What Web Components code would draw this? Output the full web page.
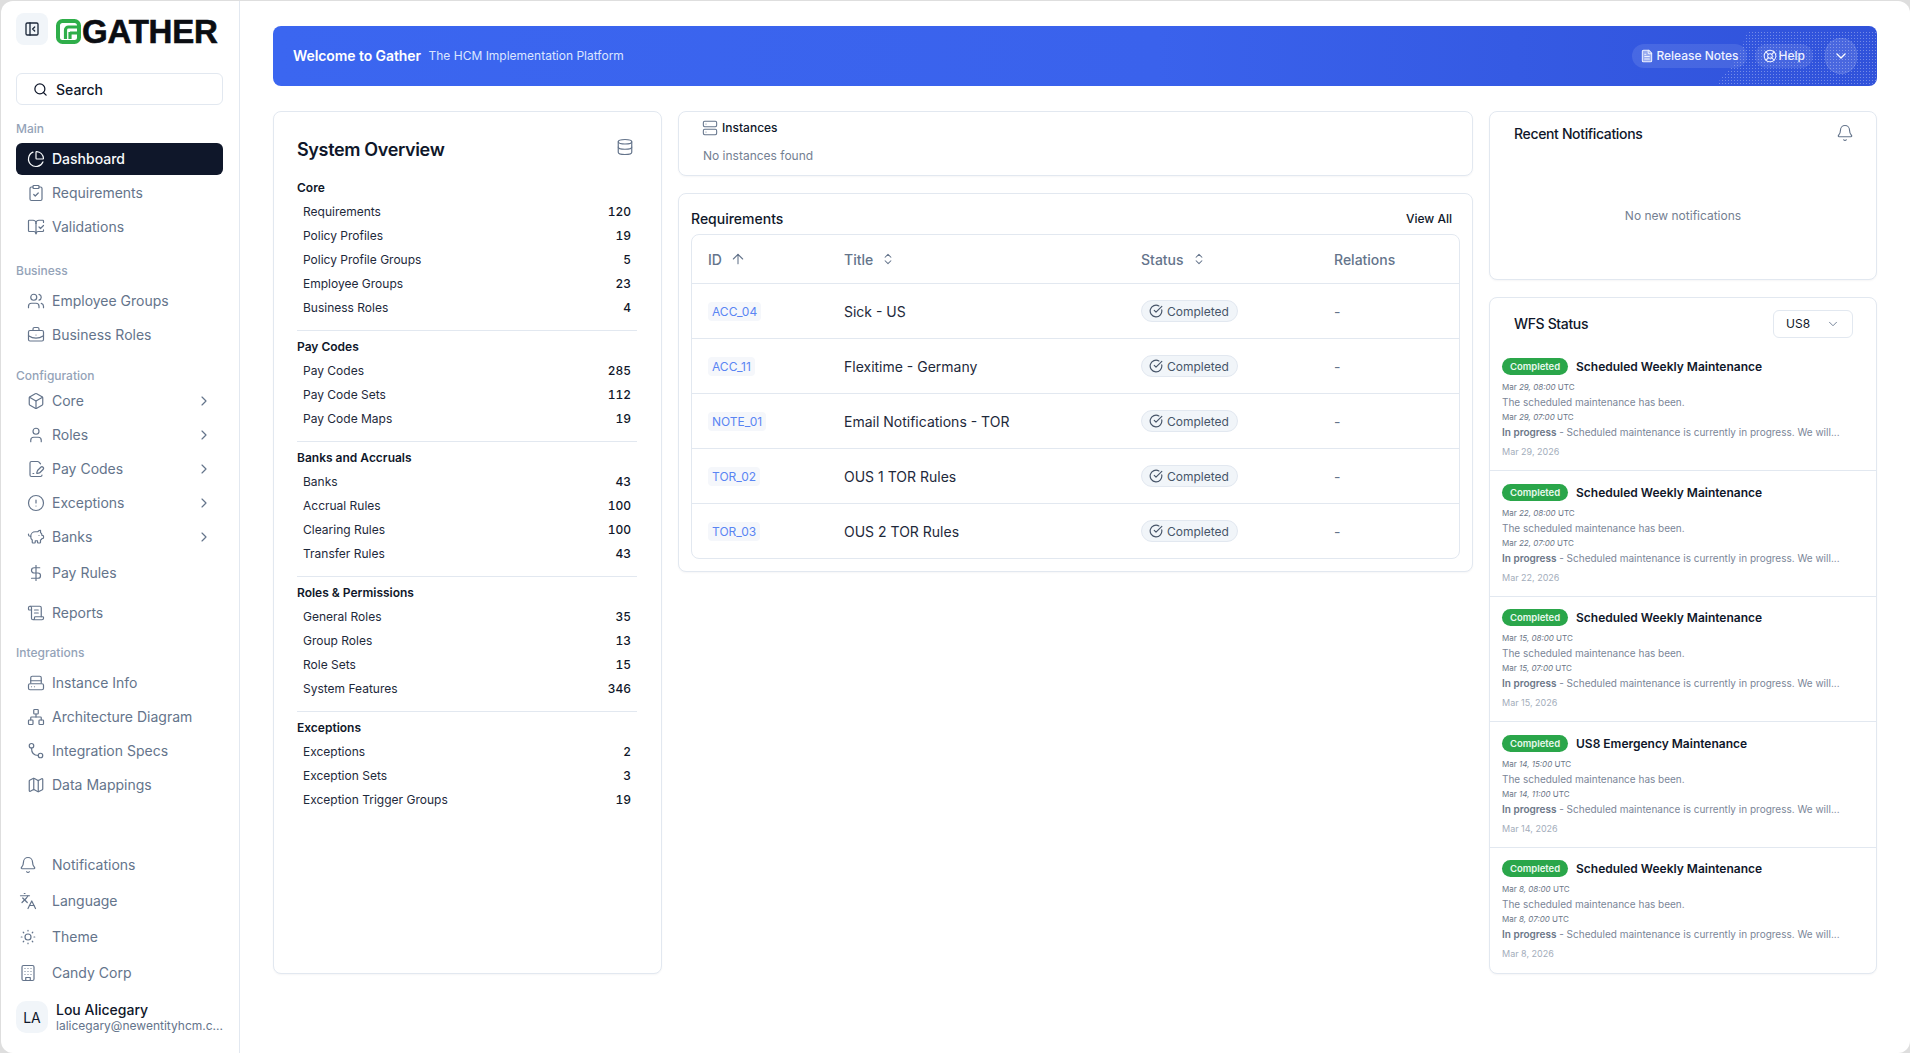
<!DOCTYPE html>
<html lang="en">
<head>
<meta charset="utf-8">
<title>Gather</title>
<style>
  html, body { margin: 0; height: 100%; }
  body {
    background: #dedede;
    overflow: hidden;
    font-family: Inter, "Liberation Sans", sans-serif;
    color: #0f172a;
    font-size: 14px;
  }
</style>
</head>
<body>
<app-shell>
  <app-sidebar slot="sidebar">
    <nav-section label="Main" style="--top:16px;--below:6px">
      <nav-item icon="pie" active>Dashboard</nav-item>
      <nav-item icon="clipboard">Requirements</nav-item>
      <nav-item icon="book">Validations</nav-item>
    </nav-section>
    <nav-section label="Business" style="--top:18px;--below:6px">
      <nav-item icon="users">Employee Groups</nav-item>
      <nav-item icon="briefcase">Business Roles</nav-item>
    </nav-section>
    <nav-section label="Configuration" style="--top:15px;--below:1px">
      <nav-item icon="box" more>Core</nav-item>
      <nav-item icon="user" more>Roles</nav-item>
      <nav-item icon="filepen" more>Pay Codes</nav-item>
      <nav-item icon="alert" more>Exceptions</nav-item>
      <nav-item icon="piggy" more>Banks</nav-item>
      <nav-item icon="dollar" style="margin-top:4px">Pay Rules</nav-item>
      <nav-item icon="scroll" style="margin-top:8px">Reports</nav-item>
    </nav-section>
    <nav-section label="Integrations" style="--top:14px;--below:6px">
      <nav-item icon="drive">Instance Info</nav-item>
      <nav-item icon="network">Architecture Diagram</nav-item>
      <nav-item icon="route">Integration Specs</nav-item>
      <nav-item icon="map">Data Mappings</nav-item>
    </nav-section>
    <nav-item slot="footer" icon="bell" compact>Notifications</nav-item>
    <nav-item slot="footer" icon="languages" compact>Language</nav-item>
    <nav-item slot="footer" icon="sun" compact>Theme</nav-item>
    <nav-item slot="footer" icon="building" compact>Candy Corp</nav-item>
    <user-chip slot="footer" initials="LA" name="Lou Alicegary" email="lalicegary@newentityhcm.c..."></user-chip>
  </app-sidebar>

  <welcome-banner></welcome-banner>

  <dash-grid>
    <overview-card slot="left">
      <stat-group title="Core">
        <stat-row value="120">Requirements</stat-row>
        <stat-row value="19">Policy Profiles</stat-row>
        <stat-row value="5">Policy Profile Groups</stat-row>
        <stat-row value="23">Employee Groups</stat-row>
        <stat-row value="4">Business Roles</stat-row>
      </stat-group>
      <stat-group title="Pay Codes">
        <stat-row value="285">Pay Codes</stat-row>
        <stat-row value="112">Pay Code Sets</stat-row>
        <stat-row value="19">Pay Code Maps</stat-row>
      </stat-group>
      <stat-group title="Banks and Accruals">
        <stat-row value="43">Banks</stat-row>
        <stat-row value="100">Accrual Rules</stat-row>
        <stat-row value="100">Clearing Rules</stat-row>
        <stat-row value="43">Transfer Rules</stat-row>
      </stat-group>
      <stat-group title="Roles &amp; Permissions">
        <stat-row value="35">General Roles</stat-row>
        <stat-row value="13">Group Roles</stat-row>
        <stat-row value="15">Role Sets</stat-row>
        <stat-row value="346">System Features</stat-row>
      </stat-group>
      <stat-group title="Exceptions" last>
        <stat-row value="2">Exceptions</stat-row>
        <stat-row value="3">Exception Sets</stat-row>
        <stat-row value="19">Exception Trigger Groups</stat-row>
      </stat-group>
    </overview-card>

    <instances-card slot="middle"></instances-card>
    <req-card slot="middle">
      <req-row code="ACC_04" status="Completed">Sick - US</req-row>
      <req-row code="ACC_11" status="Completed">Flexitime - Germany</req-row>
      <req-row code="NOTE_01" status="Completed">Email Notifications - TOR</req-row>
      <req-row code="TOR_02" status="Completed">OUS 1 TOR Rules</req-row>
      <req-row code="TOR_03" status="Completed" last>OUS 2 TOR Rules</req-row>
    </req-card>

    <notifications-card slot="right"></notifications-card>
    <wfs-card slot="right">
      <wfs-item heading="Scheduled Weekly Maintenance" day="29" first="08:00" second="07:00" date="Mar 29, 2026"></wfs-item>
      <wfs-item heading="Scheduled Weekly Maintenance" day="22" first="08:00" second="07:00" date="Mar 22, 2026"></wfs-item>
      <wfs-item heading="Scheduled Weekly Maintenance" day="15" first="08:00" second="07:00" date="Mar 15, 2026"></wfs-item>
      <wfs-item heading="US8 Emergency Maintenance" day="14" first="15:00" second="11:00" date="Mar 14, 2026"></wfs-item>
      <wfs-item heading="Scheduled Weekly Maintenance" day="8" first="08:00" second="07:00" date="Mar 8, 2026" last></wfs-item>
    </wfs-card>
  </dash-grid>
</app-shell>

<script>
const ICONS = {
  panel: '<rect x="3" y="3" width="18" height="18" rx="2"/><path d="M9 3v18"/><path d="m16 15-3-3 3-3"/>',
  search: '<circle cx="11" cy="11" r="8"/><path d="m21 21-4.3-4.3"/>',
  pie: '<path d="M21 12c.552 0 1.005-.449.95-.998a10 10 0 0 0-8.953-8.951c-.55-.055-.998.398-.998.95v8a1 1 0 0 0 1 1z"/><path d="M21.21 15.89A10 10 0 1 1 8 2.83"/>',
  clipboard: '<rect x="8" y="2" width="8" height="4" rx="1"/><path d="M16 4h2a2 2 0 0 1 2 2v14a2 2 0 0 1-2 2H6a2 2 0 0 1-2-2V6a2 2 0 0 1 2-2h2"/><path d="m9 14 2 2 4-4"/>',
  book: '<path d="M12 21V7"/><path d="m16 12 2 2 4-4"/><path d="M22 6V4a1 1 0 0 0-1-1h-5a4 4 0 0 0-4 4 4 4 0 0 0-4-4H3a1 1 0 0 0-1 1v13a1 1 0 0 0 1 1h6a3 3 0 0 1 3 3 3 3 0 0 1 3-3h6a1 1 0 0 0 1-1v-1.3"/>',
  users: '<path d="M16 21v-2a4 4 0 0 0-4-4H6a4 4 0 0 0-4 4v2"/><path d="M16 3.128a4 4 0 0 1 0 7.744"/><path d="M22 21v-2a4 4 0 0 0-3-3.87"/><circle cx="9" cy="7" r="4"/>',
  briefcase: '<path d="M12 12h.01"/><path d="M16 6V4a2 2 0 0 0-2-2h-4a2 2 0 0 0-2 2v2"/><path d="M22 13a18.15 18.15 0 0 1-20 0"/><rect x="2" y="6" width="20" height="14" rx="2"/>',
  box: '<path d="M21 8a2 2 0 0 0-1-1.73l-7-4a2 2 0 0 0-2 0l-7 4A2 2 0 0 0 3 8v8a2 2 0 0 0 1 1.73l7 4a2 2 0 0 0 2 0l7-4A2 2 0 0 0 21 16Z"/><path d="m3.3 7 8.7 5 8.7-5"/><path d="M12 22V12"/>',
  user: '<path d="M19 21v-2a4 4 0 0 0-4-4H9a4 4 0 0 0-4 4v2"/><circle cx="12" cy="7" r="4"/>',
  filepen: '<path d="m18 5-2.414-2.414A2 2 0 0 0 14.172 2H6a2 2 0 0 0-2 2v16a2 2 0 0 0 2 2h12a2 2 0 0 0 2-2"/><path d="M21.378 12.626a1 1 0 0 0-3.004-3.004l-4.01 4.012a2 2 0 0 0-.506.854l-.837 2.87a.5.5 0 0 0 .62.62l2.87-.837a2 2 0 0 0 .854-.506z"/><path d="M8 18h1"/>',
  alert: '<circle cx="12" cy="12" r="10"/><path d="M12 8v4"/><path d="M12 16h.01"/>',
  piggy: '<path d="M11 17h3v2a1 1 0 0 0 1 1h2a1 1 0 0 0 1-1v-3a3.16 3.16 0 0 0 2-2h1a1 1 0 0 0 1-1v-2a1 1 0 0 0-1-1h-1a5 5 0 0 0-2-4V3a4 4 0 0 0-3.2 1.6l-.3.4H11a6 6 0 0 0-6 6v1a5 5 0 0 0 2 4v3a1 1 0 0 0 1 1h2a1 1 0 0 0 1-1z"/><path d="M16 10h.01"/><path d="M2 8v1a2 2 0 0 0 2 2h1"/>',
  dollar: '<path d="M12 2v20"/><path d="M17 5H9.5a3.5 3.5 0 0 0 0 7h5a3.5 3.5 0 0 1 0 7H6"/>',
  scroll: '<path d="M15 12h-5"/><path d="M15 8h-5"/><path d="M19 17V5a2 2 0 0 0-2-2H4"/><path d="M8 21h12a2 2 0 0 0 2-2v-1a1 1 0 0 0-1-1H11a1 1 0 0 0-1 1v1a2 2 0 1 1-4 0V5a2 2 0 1 0-4 0v2a1 1 0 0 0 1 1h3"/>',
  drive: '<path d="M5 12V5a2 2 0 0 1 2-2h10a2 2 0 0 1 2 2v7"/><path d="M5 9h14"/><rect x="2" y="13" width="20" height="8" rx="2"/><path d="M6 17h.01"/><path d="M10 17h.01"/>',
  network: '<rect x="16" y="16" width="6" height="6" rx="1"/><rect x="2" y="16" width="6" height="6" rx="1"/><rect x="9" y="2" width="6" height="6" rx="1"/><path d="M5 16v-3a1 1 0 0 1 1-1h12a1 1 0 0 1 1 1v3"/><path d="M12 12V8"/>',
  route: '<circle cx="6" cy="5" r="3"/><circle cx="18" cy="18" r="3"/><path d="M6 8c0 6 3 10 9 10"/>',
  map: '<path d="M14.106 5.553a2 2 0 0 0 1.788 0l3.659-1.83A1 1 0 0 1 21 4.619v12.764a1 1 0 0 1-.553.894l-4.553 2.277a2 2 0 0 1-1.788 0l-4.212-2.106a2 2 0 0 0-1.788 0l-3.659 1.83A1 1 0 0 1 3 19.381V6.618a1 1 0 0 1 .553-.894l4.553-2.277a2 2 0 0 1 1.788 0z"/><path d="M15 5.764v15"/><path d="M9 3.236v15"/>',
  bell: '<path d="M10.268 21a2 2 0 0 0 3.464 0"/><path d="M3.262 15.326A1 1 0 0 0 4 17h16a1 1 0 0 0 .74-1.673C19.41 13.956 18 12.499 18 8A6 6 0 0 0 6 8c0 4.499-1.411 5.956-2.738 7.326"/>',
  languages: '<path d="m5 8 6 6"/><path d="m4 14 6-6 2-3"/><path d="M2 5h12"/><path d="M7 2h1"/><path d="m22 22-5-10-5 10"/><path d="M14 18h6"/>',
  sun: '<circle cx="12" cy="12" r="4"/><path d="M12 3v1"/><path d="M12 20v1"/><path d="M3 12h1"/><path d="M20 12h1"/><path d="m18.364 5.636-.707.707"/><path d="m6.343 17.657-.707.707"/><path d="m5.636 5.636.707.707"/><path d="m17.657 17.657.707.707"/>',
  building: '<rect x="4" y="2" width="16" height="20" rx="2"/><path d="M9 22v-4h6v4"/><path d="M8 6h.01M12 6h.01M16 6h.01M8 10h.01M12 10h.01M16 10h.01M8 14h.01M12 14h.01M16 14h.01"/>',
  right: '<path d="m9 18 6-6-6-6"/>',
  down: '<path d="m6 9 6 6 6-6"/>',
  arrowup: '<path d="m5 12 7-7 7 7"/><path d="M12 19V5"/>',
  updown: '<path d="m7 15 5 5 5-5"/><path d="m7 9 5-5 5 5"/>',
  database: '<ellipse cx="12" cy="5" rx="9" ry="3"/><path d="M3 5v14a9 3 0 0 0 18 0V5"/><path d="M3 12a9 3 0 0 0 18 0"/>',
  check: '<path d="M21.801 10A10 10 0 1 1 17 3.335"/><path d="m9 11 3 3L22 4"/>',
  server: '<rect x="2" y="2" width="20" height="8" rx="2"/><rect x="2" y="14" width="20" height="8" rx="2"/><path d="M6 6h.01"/><path d="M6 18h.01"/>',
  filetext: '<path d="M15 2H6a2 2 0 0 0-2 2v16a2 2 0 0 0 2 2h12a2 2 0 0 0 2-2V7Z" fill="rgba(255,255,255,.45)"/><path d="M14 2v4a2 2 0 0 0 2 2h4"/><path d="M10 9H8"/><path d="M16 13H8"/><path d="M16 17H8"/>',
  lifebuoy: '<circle cx="12" cy="12" r="10"/><path d="m4.93 4.93 4.24 4.24"/><path d="m14.83 9.17 4.24-4.24"/><path d="m14.83 14.83 4.24 4.24"/><path d="m9.17 14.83-4.24 4.24"/><circle cx="12" cy="12" r="4"/>'
}

class UiIcon extends HTMLElement {
  connectedCallback() {
    const size = this.getAttribute('size') || 16
    const stroke = this.getAttribute('stroke') || 2
    this.attachShadow({ mode: 'open' }).innerHTML = `
      <style>
        :host { display: inline-flex; flex: none; }
        svg { display: block; }
      </style>
      <svg width="${size}" height="${size}" viewBox="0 0 24 24" fill="none" stroke="currentColor"
        stroke-width="${stroke}" stroke-linecap="round" stroke-linejoin="round">${ICONS[this.getAttribute('name')] || ''}</svg>`
  }
}

class AppShell extends HTMLElement {
  constructor() {
    super()
    this.attachShadow({ mode: 'open' }).innerHTML = `
      <style>
        :host {
          display: flex;
          margin: 1px 0 0 1px;
          height: calc(100vh - 1px);
          background: #fff;
          border-radius: 12px;
          overflow: hidden;
        }
        main { flex: 1; min-width: 0; padding: 25px 33px 0 33px; }
      </style>
      <slot name="sidebar"></slot>
      <main><slot></slot></main>`
  }
}

class AppSidebar extends HTMLElement {
  constructor() {
    super()
    this.attachShadow({ mode: 'open' }).innerHTML = `
      <style>
        :host {
          display: flex;
          flex-direction: column;
          flex: none;
          box-sizing: border-box;
          width: 239px;
          height: 100%;
          padding: 12px 16px 20px 15px;
          border-right: 1px solid #e2e8f0;
        }
        .head { display: flex; align-items: flex-start; height: 32px; }
        .toggle {
          width: 32px; height: 32px; border-radius: 8px; background: #f1f5f9;
          display: flex; align-items: center; justify-content: center; color: #1e293b;
        }
        .mark { margin: 6px 0 0 8px; }
        .word {
          font-family: "Liberation Sans", Arial, sans-serif;
          font-weight: 700;
          font-size: 33px;
          line-height: 32px;
          letter-spacing: -0.2px;
          margin: 3px 0 0 1px;
          color: #0b0d12;
          -webkit-text-stroke: 0.6px #0b0d12;
        }
        .search {
          display: flex; align-items: center; gap: 8px;
          box-sizing: border-box; height: 32px; margin-top: 28px;
          padding-left: 16px; border: 1px solid #e2e8f0; border-radius: 6px;
          font-weight: 500; color: #0f172a;
        }
        .spacer { flex: 1; }
        .foot { display: flex; flex-direction: column; }
      </style>
      <div class="head">
        <span class="toggle"><ui-icon name="panel" size="16"></ui-icon></span>
        <svg class="mark" width="25" height="25" viewBox="0 0 25 25" fill="none">
          <rect x="2" y="2" width="21" height="21" rx="4.5" stroke="#2fae4a" stroke-width="4"/>
          <path d="M21 8H12.5a3 3 0 0 0-3 3v9" stroke="#2fae4a" stroke-width="3.2"/>
          <path d="M14 14h7" stroke="#2fae4a" stroke-width="3.2"/>
          <path d="M14 13v7" stroke="#2fae4a" stroke-width="3.2"/>
        </svg>
        <span class="word">GATHER</span>
      </div>
      <div class="search"><ui-icon name="search" size="15"></ui-icon>Search</div>
      <slot></slot>
      <div class="spacer"></div>
      <div class="foot"><slot name="footer"></slot></div>`
  }
}

class NavSection extends HTMLElement {
  constructor() {
    super()
    this.attachShadow({ mode: 'open' }).innerHTML = `
      <style>
        :host { display: block; margin-top: var(--top, 16px); }
        .label {
          font-size: 12px; line-height: 16px; font-weight: 500; color: #94a3b8;
          margin-bottom: var(--below, 7px);
        }
      </style>
      <div class="label"></div>
      <slot></slot>`
  }
  connectedCallback() {
    this.shadowRoot.querySelector('.label').textContent = this.getAttribute('label')
  }
}

class NavItem extends HTMLElement {
  constructor() {
    super()
    this.attachShadow({ mode: 'open' }).innerHTML = `
      <style>
        :host {
          display: flex; align-items: center; gap: 7px;
          box-sizing: border-box; height: 32px; margin-bottom: 2px;
          padding: 0 11px; border-radius: 6px;
          color: #64748b; font-size: 14px; white-space: nowrap;
        }
        :host([active]) { background: #0f172a; color: #f8fafc; font-weight: 500; }
        :host([compact]) { height: 36px; margin-bottom: 0; padding-left: 3px; gap: 15px; }
        .label { flex: 1; padding-bottom: 1px; }
        .slotbox { display: inline-flex; }
      </style>
      <span class="slotbox" id="icon"></span>
      <span class="label"><slot></slot></span>
      <span class="slotbox" id="more"></span>`
  }
  connectedCallback() {
    const root = this.shadowRoot
    root.querySelector('#icon').innerHTML = `<ui-icon name="${this.getAttribute('icon')}" size="18" stroke="1.6"></ui-icon>`
    if (this.hasAttribute('more')) {
      root.querySelector('#more').innerHTML = '<ui-icon name="right" size="16" stroke="1.75"></ui-icon>'
    }
  }
}

class UserChip extends HTMLElement {
  connectedCallback() {
    this.attachShadow({ mode: 'open' }).innerHTML = `
      <style>
        :host { display: flex; align-items: center; gap: 8px; margin-top: 10px; height: 32px; }
        .avatar {
          flex: none; width: 32px; height: 32px; border-radius: 10px; background: #f1f5f9;
          display: flex; align-items: center; justify-content: center; font-size: 14px;
        }
        .info { min-width: 0; flex: 1; }
        .name { font-size: 14px; line-height: 17px; font-weight: 500; color: #0f172a; }
        .email { font-size: 12px; line-height: 15px; color: #64748b; white-space: nowrap; }
      </style>
      <div class="avatar">${this.getAttribute('initials')}</div>
      <div class="info">
        <div class="name">${this.getAttribute('name')}</div>
        <div class="email">${this.getAttribute('email')}</div>
      </div>`
  }
}

class WelcomeBanner extends HTMLElement {
  constructor() {
    super()
    this.attachShadow({ mode: 'open' }).innerHTML = `
      <style>
        :host {
          display: flex; align-items: center; position: relative; overflow: hidden;
          box-sizing: border-box; height: 60px; padding: 0 20px 1px;
          border-radius: 8px; color: #fff;
          background: linear-gradient(90deg, #3b66f0 0%, #3a62ec 55%, #3052da 100%);
        }
        .dots {
          position: absolute; right: 0; top: 5px; bottom: 0; width: 162px;
          background-image: radial-gradient(rgba(255,255,255,.32) .7px, transparent .9px);
          background-size: 3px 3px;
          clip-path: polygon(20% 0, 100% 0, 100% 100%, 0 100%, 14% 50%);
        }
        .title { font-size: 14px; font-weight: 600; letter-spacing: -0.08px; }
        .sub { font-size: 12px; margin-left: 7.5px; color: #dbe5ff; }
        .actions { position: relative; margin-left: auto; display: flex; align-items: center; gap: 8px; }
        .pill {
          display: flex; align-items: center; gap: 2px; height: 24px; padding: 0 8px;
          border-radius: 12px; background: rgba(255,255,255,.1);
          font-size: 12px; font-weight: 500; color: #eef2ff;
        }
        .round {
          display: flex; align-items: center; justify-content: center;
          box-sizing: border-box; width: 32px; height: 36px; margin-left: 4px;
          border-radius: 16px; background: rgba(255,255,255,.12);
          border: 1px solid rgba(255,255,255,.1);
        }
      </style>
      <div class="dots"></div>
      <span class="title">Welcome to Gather</span>
      <span class="sub">The HCM Implementation Platform</span>
      <div class="actions">
        <span class="pill"><ui-icon name="filetext" size="14" stroke="1.75"></ui-icon>Release Notes</span>
        <span class="pill"><ui-icon name="lifebuoy" size="14" stroke="1.75"></ui-icon>Help</span>
        <span class="round"><ui-icon name="down" size="16"></ui-icon></span>
      </div>`
  }
}

class DashGrid extends HTMLElement {
  constructor() {
    super()
    this.attachShadow({ mode: 'open' }).innerHTML = `
      <style>
        :host {
          display: grid; grid-template-columns: 389px 1fr 388px; gap: 16px;
          margin-top: 25px; align-items: stretch;
        }
        .col { display: flex; flex-direction: column; gap: 17px; min-width: 0; }
        .col.left { gap: 0; }
      </style>
      <div class="col left"><slot name="left"></slot></div>
      <div class="col"><slot name="middle"></slot></div>
      <div class="col"><slot name="right"></slot></div>`
  }
}

// shared card box, every card copies this in its own shadow style
const CARD = `
  display: block; box-sizing: border-box; background: #fff;
  border: 1px solid #e2e8f0; border-radius: 8px;
  box-shadow: 0 1px 2px rgba(15,23,42,.04);`

class OverviewCard extends HTMLElement {
  constructor() {
    super()
    this.attachShadow({ mode: 'open' }).innerHTML = `
      <style>
        :host { ${CARD} flex: 1; padding: 23px 24px 0 23px; }
        .head { display: flex; align-items: center; justify-content: space-between; height: 30px; margin-bottom: 11px; }
        h2 { margin: 0 0 1px; font-size: 18px; font-weight: 600; letter-spacing: -0.35px; color: #0f172a; }
        .head ui-icon { color: #64748b; margin: -6px 3px 0 0; }
      </style>
      <div class="head"><h2>System Overview</h2><ui-icon name="database" size="18" stroke="1.6"></ui-icon></div>
      <slot></slot>`
  }
}

class StatGroup extends HTMLElement {
  constructor() {
    super()
    this.attachShadow({ mode: 'open' }).innerHTML = `
      <style>
        :host { display: block; padding-bottom: 10px; margin-bottom: 4px; border-bottom: 1px solid #e2e8f0; }
        :host([last]) { border-bottom: 0; }
        .title { font-size: 12px; line-height: 24px; font-weight: 600; color: #0f172a; }
      </style>
      <div class="title"></div>
      <slot></slot>`
  }
  connectedCallback() {
    this.shadowRoot.querySelector('.title').textContent = this.getAttribute('title')
  }
}

class StatRow extends HTMLElement {
  constructor() {
    super()
    this.attachShadow({ mode: 'open' }).innerHTML = `
      <style>
        :host {
          display: flex; justify-content: space-between;
          padding: 0 6px 0 6px; font-size: 12px; line-height: 24px; color: #1e293b;
        }
        .value { font-weight: 500; color: #0f172a; font-variant-numeric: tabular-nums; }
      </style>
      <span><slot></slot></span><span class="value"></span>`
  }
  connectedCallback() {
    this.shadowRoot.querySelector('.value').textContent = this.getAttribute('value')
  }
}

class InstancesCard extends HTMLElement {
  constructor() {
    super()
    this.attachShadow({ mode: 'open' }).innerHTML = `
      <style>
        :host { ${CARD} height: 65px; padding: 7px 24px 0 23px; }
        .head { display: flex; align-items: center; gap: 4px; font-size: 12px; line-height: 18px; font-weight: 500; color: #0f172a; }
        .head ui-icon { color: #64748b; }
        p { margin: 10px 0 0 1px; font-size: 12px; line-height: 18px; color: #748092; }
      </style>
      <div class="head"><ui-icon name="server" size="16" stroke="1.6"></ui-icon>Instances</div>
      <p>No instances found</p>`
  }
}

const REQ_COLUMNS = 'grid-template-columns: 136px 297px 193px 1fr;'

class ReqCard extends HTMLElement {
  constructor() {
    super()
    this.attachShadow({ mode: 'open' }).innerHTML = `
      <style>
        :host { ${CARD} padding: 0 12px 12px; }
        .top { display: flex; align-items: center; justify-content: space-between; box-sizing: border-box; height: 40px; padding: 8px 8px 0 0; }
        .top b { font-size: 14px; font-weight: 500; color: #0f172a; }
        .top a { font-size: 12px; font-weight: 500; color: #0f172a; }
        .table { border: 1px solid #e2e8f0; border-radius: 8px; overflow: hidden; }
        .cols {
          display: grid; ${REQ_COLUMNS} align-items: center; height: 48px;
          border-bottom: 1px solid #e2e8f0;
          font-size: 14px; font-weight: 500; color: #64748b;
        }
        .cols span { display: flex; align-items: center; padding-left: 16px; }
        .cols ui-icon { margin-left: 8px; }
      </style>
      <div class="top"><b>Requirements</b><a>View All</a></div>
      <div class="table">
        <div class="cols">
          <span>ID<ui-icon name="arrowup" size="16" stroke="1.6"></ui-icon></span>
          <span>Title<ui-icon name="updown" size="14" stroke="1.75"></ui-icon></span>
          <span>Status<ui-icon name="updown" size="14" stroke="1.75"></ui-icon></span>
          <span>Relations</span>
        </div>
        <slot></slot>
      </div>`
  }
}

class ReqRow extends HTMLElement {
  constructor() {
    super()
    this.attachShadow({ mode: 'open' }).innerHTML = `
      <style>
        :host {
          display: grid; ${REQ_COLUMNS} align-items: center; height: 55px;
          box-sizing: border-box; border-bottom: 1px solid #e2e8f0;
          font-size: 14px; color: #1e293b;
        }
        :host([last]) { border-bottom: 0; height: 54px; }
        .cell { padding-left: 16px; }
        .code {
          display: inline-block; padding: 2px 4px; border-radius: 4px; line-height: 15px;
          background: #f5f7fb; color: #5a85f3; font-size: 12px;
        }
        .chip {
          display: inline-flex; align-items: center; gap: 4px; box-sizing: border-box;
          height: 22px; padding: 0 8px 0 7px; border-radius: 11px;
          background: #f1f5f9; border: 1px solid #e2e8f0;
          font-size: 12px; color: #475569;
        }
        .dash { color: #64748b; }
      </style>
      <div class="cell"><span class="code"></span></div>
      <div class="cell"><slot></slot></div>
      <div class="cell"><span class="chip"><ui-icon name="check" size="14"></ui-icon><span class="status"></span></span></div>
      <div class="cell dash">-</div>`
  }
  connectedCallback() {
    this.shadowRoot.querySelector('.code').textContent = this.getAttribute('code')
    this.shadowRoot.querySelector('.status').textContent = this.getAttribute('status')
  }
}

class NotificationsCard extends HTMLElement {
  constructor() {
    super()
    this.attachShadow({ mode: 'open' }).innerHTML = `
      <style>
        :host { ${CARD} height: 169px; padding: 0 22px 0 24px; }
        .head { display: flex; align-items: center; justify-content: space-between; height: 42px; font-weight: 500; font-size: 14px; letter-spacing: -0.35px; color: #0f172a; }
        .head ui-icon { color: #64748b; }
        p { margin: 53px 0 0; padding-right: 2px; text-align: center; font-size: 12px; line-height: 18px; color: #748092; }
      </style>
      <div class="head">Recent Notifications<ui-icon name="bell" size="18" stroke="1.5"></ui-icon></div>
      <p>No new notifications</p>`
  }
}

class WfsCard extends HTMLElement {
  constructor() {
    super()
    this.attachShadow({ mode: 'open' }).innerHTML = `
      <style>
        :host { ${CARD} }
        .head {
          display: flex; align-items: center; justify-content: space-between;
          height: 47.5px; padding: 4px 23px 0 24px; box-sizing: border-box;
          font-size: 14px; font-weight: 500; letter-spacing: -0.35px; color: #0f172a;
        }
        .select {
          display: flex; align-items: center; justify-content: space-between;
          box-sizing: border-box; width: 80px; height: 28px; padding: 0 12px;
          border: 1px solid #e2e8f0; border-radius: 6px; font-size: 12px; font-weight: 400; letter-spacing: 0;
        }
        .select ui-icon { color: #64748b; }
      </style>
      <div class="head">WFS Status<span class="select">US8<ui-icon name="down" size="14" stroke="1.5"></ui-icon></span></div>
      <slot></slot>`
  }
}

class WfsItem extends HTMLElement {
  connectedCallback() {
    const day = this.getAttribute('day')
    const stamp = time => `Mar <i>${day}, ${time}</i> UTC`
    this.attachShadow({ mode: 'open' }).innerHTML = `
      <style>
        :host { display: block; box-sizing: border-box; height: 125.5px; padding: 12.5px 12px 0; border-bottom: 1px solid #e2e8f0; }
        :host([last]) { border-bottom: 0; }
        .top { display: flex; align-items: center; gap: 8px; height: 17px; margin-bottom: 5px; }
        .badge {
          height: 17px; width: 66px; border-radius: 9px; background: #2aa64a; color: #e9f9ee;
          font-size: 9.5px; line-height: 17px; font-weight: 600; text-align: center;
        }
        .heading { font-size: 12px; font-weight: 600; color: #0f172a; }
        .meta { font-size: 8px; line-height: 15px; color: #6b7687; white-space: nowrap; }
        .text { font-size: 10px; line-height: 15px; color: #7b8698; white-space: nowrap; }
        .text b { font-weight: 600; color: #6b7687; }
        .date { margin-top: 5px; font-size: 9px; line-height: 14px; color: #a3adbb; }
      </style>
      <div class="top"><span class="badge">Completed</span><span class="heading">${this.getAttribute('heading')}</span></div>
      <div class="meta">${stamp(this.getAttribute('first'))}</div>
      <div class="text">The scheduled maintenance has been.</div>
      <div class="meta">${stamp(this.getAttribute('second'))}</div>
      <div class="text"><b>In progress</b> - Scheduled maintenance is currently in progress. We will...</div>
      <div class="date">${this.getAttribute('date')}</div>`
  }
}

customElements.define('ui-icon', UiIcon)
customElements.define('app-shell', AppShell)
customElements.define('app-sidebar', AppSidebar)
customElements.define('nav-section', NavSection)
customElements.define('nav-item', NavItem)
customElements.define('user-chip', UserChip)
customElements.define('welcome-banner', WelcomeBanner)
customElements.define('dash-grid', DashGrid)
customElements.define('overview-card', OverviewCard)
customElements.define('stat-group', StatGroup)
customElements.define('stat-row', StatRow)
customElements.define('instances-card', InstancesCard)
customElements.define('req-card', ReqCard)
customElements.define('req-row', ReqRow)
customElements.define('notifications-card', NotificationsCard)
customElements.define('wfs-card', WfsCard)
customElements.define('wfs-item', WfsItem)
</script>
</body>
</html>
